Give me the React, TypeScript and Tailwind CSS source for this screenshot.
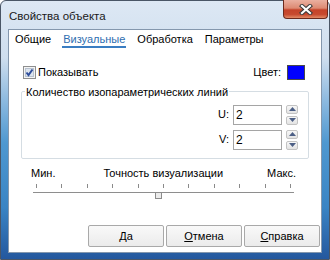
import React from 'react';

const TICKS = Array.from({ length: 11 }, (_, i) => i);

function Checkbox() {
  return (
    <svg width="13" height="13" viewBox="0 0 13 13">
      <rect x="0.5" y="0.5" width="12" height="12" fill="#f4f4f4" stroke="#8e8f8f" />
      <rect x="2.5" y="2.5" width="8" height="8" fill="#dce4ee" stroke="#b8c2cf" />
      <path d="M3.5 6.5 L5.5 9 L9.5 3.5" fill="none" stroke="#2e4d9b" strokeWidth="2" />
    </svg>
  );
}

function Spinner() {
  return (
    <div className="flex flex-col gap-[2px] w-[12px] h-[20px]">
      <div className="flex-1 flex items-center justify-center border border-[#c3c3c3] rounded-[2px] bg-gradient-to-b from-[#f7f7f7] to-[#e3e3e3]">
        <svg width="7" height="4" viewBox="0 0 7 4"><path d="M0 4 L3.5 0 L7 4 Z" fill="#4c5f86" /></svg>
      </div>
      <div className="flex-1 flex items-center justify-center border border-[#c3c3c3] rounded-[2px] bg-gradient-to-b from-[#f7f7f7] to-[#e3e3e3]">
        <svg width="7" height="4" viewBox="0 0 7 4"><path d="M0 0 L7 0 L3.5 4 Z" fill="#4c5f86" /></svg>
      </div>
    </div>
  );
}

function NumField({ label }: { label: string }) {
  return (
    <div className="flex items-center justify-end">
      <span className="mr-[4px]">{label}</span>
      <div className="w-[49px] h-[20px] border border-[#a5a5a5] bg-white pl-[2px] leading-[18px] text-[12px]">2</div>
      <div className="ml-[4px]">
        <Spinner />
      </div>
    </div>
  );
}

function Button({ children }: { children: React.ReactNode }) {
  return (
    <div className="w-[76px] h-[22px] flex items-center justify-center border border-[#a9a9a9] rounded-[2px] bg-gradient-to-b from-[#f9f9f9] to-[#ebebeb]">
      {children}
    </div>
  );
}

export default function App() {
  return (
    <div
      className="w-[330px] h-[260px] flex flex-col border border-[#4a5666] rounded-t-[6px] px-[7px] pb-[6px] bg-[linear-gradient(180deg,#dde8f4_0%,#cfdeee_22%,#8fbbe0_38%,#4f98d0_55%,#3a84c4_80%,#24589e_100%)] text-[11px] text-black"
      style={{ fontFamily: '"Liberation Sans", Arial, sans-serif' }}
    >
      {/* Title bar */}
      <div className="h-[28px] flex items-start">
        <span className="pt-[7px] pl-[1px] text-[11.5px] text-[#1a1a1a]">Свойства объекта</span>
        <div className="ml-auto mr-[-6px] mt-[-1px] w-[45px] h-[19px] flex items-center justify-center border border-[#6b2a1d] border-t-0 rounded-b-[4px] bg-[linear-gradient(180deg,#eab0a0_0%,#dd8a73_45%,#c4432a_55%,#c74a2f_80%,#e28a66_100%)]">
          <svg width="14" height="11" viewBox="0 0 14 11">
            <path d="M3 2 L11 9 M11 2 L3 9" stroke="#3a3a3a" strokeWidth="4.2" strokeLinecap="square" />
            <path d="M3 2 L11 9 M11 2 L3 9" stroke="#ffffff" strokeWidth="2.2" strokeLinecap="square" />
          </svg>
        </div>
      </div>

      {/* Client area */}
      <div className="flex-1 flex flex-col bg-white border border-[#8497ad]">
        {/* Tabs */}
        <div className="flex gap-[12px] pl-[6px] pt-[3px]">
          <span className="leading-[12px]">Общие</span>
          <div className="flex flex-col">
            <span className="leading-[12px] text-[#2f6eb0]">Визуальные</span>
            <div className="h-[2px] bg-[#3a7dc2] mt-[1px] mx-[-1px]" />
          </div>
          <span className="leading-[12px]">Обработка</span>
          <span className="leading-[12px]">Параметры</span>
        </div>

        {/* Show / colour row */}
        <div className="flex items-center pl-[14px] pr-[16px] mt-[16px]">
          <Checkbox />
          <span className="ml-[2px]">Показывать</span>
          <span className="ml-auto mr-[6px]">Цвет:</span>
          <div className="w-[18px] h-[15px] border border-[#4a4a4a] bg-[#0000ff]" />
        </div>

        {/* Group box */}
        <fieldset className="mx-[12px] mt-[4px] border border-[#d5dde3] rounded-[2px] pr-[10px] pb-[8px]">
          <legend className="ml-[3px] px-[1px] leading-[14px]">Количество изопараметрических линий</legend>
          <div className="flex flex-col gap-[5px] mt-[6px]">
            <NumField label="U:" />
            <NumField label="V:" />
          </div>
        </fieldset>

        {/* Slider */}
        <div className="ml-[24px] w-[261px] mt-[7px]">
          <div className="flex justify-between items-end leading-[14px]">
            <span className="ml-[-2px]">Мин.</span>
            <span className="ml-[4px]">Точность визуализации</span>
            <span className="mr-[-2px]">Макс.</span>
          </div>
          <div className="flex justify-between px-[3px] mt-[4px]">
            {TICKS.map((t) => (
              <div key={t} className="w-px h-[4px] bg-[#8a8a8a]" />
            ))}
          </div>
          <div className="relative h-[7px] mt-[4px]">
            <div className="h-px bg-[#8e8e8e] mt-[3px]" />
            <div
              className="absolute top-0 w-[7px] h-[7px] border border-[#8c8c8c] bg-[#ececec]"
              style={{ left: 122 }}
            />
          </div>
        </div>

        <div className="flex-1" />

        {/* Buttons */}
        <div className="flex justify-end gap-[2px] pr-[1px] pb-[5px]">
          <Button>Да</Button>
          <Button>
            <span><span className="underline">О</span>тмена</span>
          </Button>
          <Button>
            <span><span className="underline">С</span>правка</span>
          </Button>
        </div>
      </div>
    </div>
  );
}
